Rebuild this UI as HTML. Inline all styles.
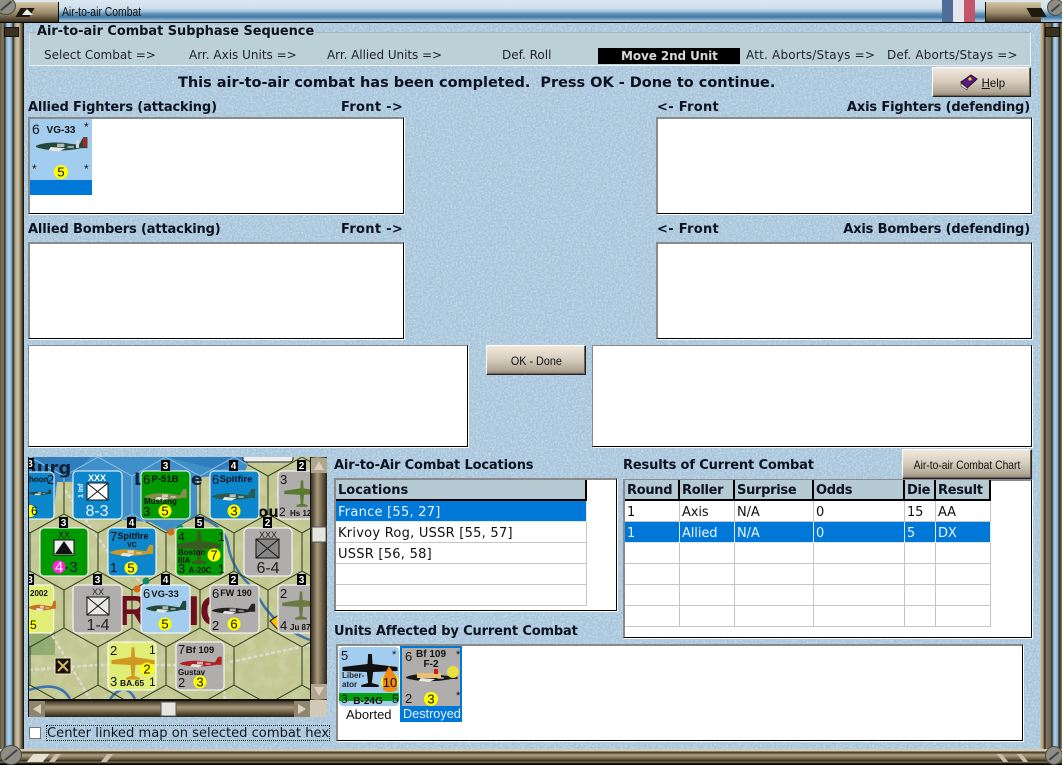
<!DOCTYPE html>
<html><head><meta charset="utf-8"><title>Air-to-air Combat</title>
<style>
html,body{margin:0;padding:0;width:1062px;height:765px;overflow:hidden;background:#a9c6dc}
*{box-sizing:border-box}
.a{position:absolute}
.t{position:absolute;white-space:pre;font-family:"DejaVu Sans",Verdana,sans-serif;color:#000;line-height:1}
.b{font-weight:bold;font-size:13px;color:#0c1220;letter-spacing:-.15px}
.f{letter-spacing:.3px}
.s{font-size:12px;color:#1c2230;top:49px}
.box{position:absolute;background:#fff;border:1px solid;border-width:2px 1px 1px 2px;border-color:#8a8a8a #000 #000 #8a8a8a;box-shadow:1px 1px 0 #fff}
.btn{position:absolute;background:linear-gradient(#f0e8dc,#d8cfc0 45%,#b3a796 85%,#8f8474);border:1px solid;border-color:#fff #222 #222 #fff;box-shadow:inset -1px -1px 0 #6e6455;font-family:"Liberation Sans",sans-serif;font-size:12px;color:#111;text-align:center;white-space:nowrap}
.h{position:absolute;background:#b5cad3;border-right:2px solid #000;border-bottom:2px solid #000;font:bold 13px "DejaVu Sans",sans-serif;color:#0c1220;padding:3px 0 0 2px;height:21px;letter-spacing:-.3px}
.c{position:absolute;font:13px "DejaVu Sans",sans-serif;color:#111;height:21px;border-right:1px solid #c6c6c6;border-bottom:1px solid #c6c6c6;padding:4px 0 0 2px;white-space:pre;letter-spacing:-.1px}
.l{letter-spacing:.25px}
.sel{background:#0078d7;color:#e8f2fb;border-color:#dce8f2}
svg text{font-family:"Liberation Sans",sans-serif}
.sc{position:absolute;border-radius:50%;background:#8d8d85;border:1px solid #4a4a40}
.sc:after{content:"";position:absolute;left:2px;right:2px;top:45%;height:2px;background:#444;transform:rotate(-40deg)}
</style></head><body>

<!-- textured background -->
<svg class="a" style="left:0;top:0" width="1062" height="765">
<filter id="n" x="0" y="0" width="100%" height="100%"><feTurbulence type="fractalNoise" baseFrequency="0.55" numOctaves="3" seed="4"/><feColorMatrix values="0 0 0 0 1  0 0 0 0 1  0 0 0 0 1  0.9 0 0 0 -0.32"/></filter>
<rect width="1062" height="765" fill="#a4c3da"/>
<rect width="1062" height="765" filter="url(#n)"/>
</svg>

<!-- title bar -->
<div class="a" style="left:0;top:0;width:1062px;height:23px;background:linear-gradient(#dce8f1,#cfe0ec 8px,#a9c6dc 11px,#5f92b8 14px,#427aa6 17px,#8fb3cd 20px,#a8c5da 22px,#000 22px)"></div>
<div class="a" style="left:942px;top:0;width:11px;height:22px;background:#506f98"></div>
<div class="a" style="left:953px;top:0;width:11px;height:22px;background:#e4e8ee"></div>
<div class="a" style="left:964px;top:0;width:11px;height:22px;background:#c4566a"></div>
<div class="a" style="left:0;top:2px;width:59px;height:21px;background:linear-gradient(#d6c8a8,#9a8a68 55%,#3c3020);border-right:1px solid #000;border-bottom:1px solid #000"></div>
<div class="a" style="left:985px;top:2px;width:56px;height:21px;background:linear-gradient(#d6c8a8,#9a8a68 55%,#3c3020);border-left:1px solid #000;border-bottom:1px solid #000"></div>
<div class="a" style="left:18px;top:8px;width:14px;height:9px;background:#1f1a10;transform:skewX(-30deg)"></div>
<svg class="a" style="left:22px;top:9px" width="12" height="7"><path d="M5 0 L11 6 H0 Z" fill="#f0f0e8"/></svg>
<div class="a" style="left:1029px;top:8px;width:15px;height:9px;background:#1f1a10;transform:skewX(30deg)"></div>
<div class="sc" style="left:-4px;top:-3px;width:20px;height:18px"></div>
<div class="sc" style="left:1047px;top:-1px;width:17px;height:17px"></div>
<div class="t" style="left:62px;top:4px;font:13px 'Liberation Sans',sans-serif;color:#111;transform:scaleX(.8);transform-origin:0 0">Air-to-air Combat</div>

<!-- side frames -->
<div class="a" style="left:0;top:23px;width:24px;height:727px;background:linear-gradient(90deg,#5f5642 0,#8a7d60 3px,#2a2416 5px,#7ba6c8 6px,#b6d4ea 9px,#6e9cc0 12px,#231d12 13px,#a89a7c 15px,#d3c9ae 18px,#7d6f52 21px,#332a1a 23px,#000 24px)"></div>
<div class="a" style="left:4px;top:27px;width:15px;height:10px;background:#3c3222;border:1px solid #111"></div>
<div class="a" style="left:1040px;top:23px;width:22px;height:727px;background:linear-gradient(90deg,#cfc6ac 0,#a89a7c 3px,#221c10 5px,#85776a 6px,#6d5f45 11px,#231d12 12px,#6e9cc0 13px,#b6d4ea 15px,#7ba6c8 18px,#2a2416 19px,#8a7d60 22px)"></div>
<div class="a" style="left:1045px;top:27px;width:15px;height:10px;background:#3c3222;border:1px solid #111"></div>
<!-- bottom frame -->
<div class="a" style="left:0;top:749px;width:1062px;height:16px;background:linear-gradient(#d6ccb2 0,#d6ccb2 2px,#3a3020 3px,#b0a280 6px,#6a5e44 10px,#2f2819 12px,#8a7d60 13px,#000 15px)"></div>
<div class="sc" style="left:0;top:745px;width:22px;height:20px"></div>
<div class="sc" style="left:1045px;top:746px;width:18px;height:19px"></div>
<div class="a" style="left:30px;top:754px;width:16px;height:8px;background:#e6e0d0;transform:skewX(-40deg)"></div>
<div class="a" style="left:52px;top:754px;width:6px;height:8px;background:#c8bfa8;transform:skewX(-40deg)"></div>
<div class="a" style="left:104px;top:754px;width:6px;height:8px;background:#c8bfa8;transform:skewX(-40deg)"></div>
<div class="a" style="left:1000px;top:754px;width:5px;height:8px;background:#c8bfa8;transform:skewX(40deg)"></div>
<div class="a" style="left:1020px;top:754px;width:5px;height:8px;background:#c8bfa8;transform:skewX(40deg)"></div>

<!-- sequence group -->
<div class="a" style="left:29px;top:32px;width:1002px;height:34px;background:#bcd0d8;border:1px solid #eef2f4;border-top-color:#a8b4b8;border-left-color:#d8e0e4"></div>
<div class="t b" style="left:36px;top:26px;background:#bcd0d8;padding:0 1px;letter-spacing:0;font-size:12.9px">Air-to-air Combat Subphase Sequence</div>
<div class="t s" style="left:44px">Select Combat =&gt;</div>
<div class="t s" style="left:189px">Arr. Axis Units =&gt;</div>
<div class="t s" style="left:327px;letter-spacing:-.05px">Arr. Allied Units =&gt;</div>
<div class="t s" style="left:502px">Def. Roll</div>
<div class="a" style="left:598px;top:48px;width:142px;height:16px;background:#000"></div>
<div class="t" style="left:621px;top:50px;font-size:12px;font-weight:bold;color:#d8d8d8;letter-spacing:-.1px">Move 2nd Unit</div>
<div class="t s" style="left:746px;letter-spacing:.2px">Att. Aborts/Stays =&gt;</div>
<div class="t s" style="left:887px;letter-spacing:.15px">Def. Aborts/Stays =&gt;</div>

<div class="t" style="left:178px;top:76px;font-size:14.5px;font-weight:bold;color:#0c1220;letter-spacing:-.02px">This air-to-air combat has been completed.  Press OK - Done to continue.</div>

<div class="btn" style="left:932px;top:67px;width:99px;height:30px;padding:8px 0 0 24px"><span style="display:inline-block;transform:scaleX(.95)"><span style="text-decoration:underline">H</span>elp</span></div>
<svg class="a" style="left:959px;top:73px" width="20" height="18"><path d="M2 9 L12 2 L18 6 L8 15 Z" fill="#5a1a78" stroke="#2a0a3a"/><path d="M2 10 L8 15 L8 17 L2 13 Z" fill="#eee" stroke="#333" stroke-width=".6"/><circle cx="11" cy="6" r="1.6" fill="#f0d040"/></svg>

<!-- labels -->
<div class="t b" style="left:28px;top:101px">Allied Fighters (attacking)</div>
<div class="t b f" style="left:341px;top:101px">Front -&gt;</div>
<div class="t b f" style="left:657px;top:101px">&lt;- Front</div>
<div class="t b" style="right:32px;top:101px">Axis Fighters (defending)</div>
<div class="t b" style="left:28px;top:223px">Allied Bombers (attacking)</div>
<div class="t b f" style="left:341px;top:223px">Front -&gt;</div>
<div class="t b f" style="left:657px;top:223px">&lt;- Front</div>
<div class="t b" style="right:32px;top:223px">Axis Bombers (defending)</div>

<div class="box" style="left:28px;top:117px;width:376px;height:97px"></div>
<div class="box" style="left:656px;top:117px;width:376px;height:97px"></div>
<div class="box" style="left:28px;top:242px;width:376px;height:97px"></div>
<div class="box" style="left:656px;top:242px;width:376px;height:97px"></div>
<div class="box" style="left:28px;top:345px;width:440px;height:102px;border-width:1px"></div>
<div class="box" style="left:592px;top:345px;width:440px;height:102px;border-width:1px"></div>
<div class="btn" style="left:486px;top:345px;width:100px;height:30px;padding-top:8px"><span style="display:inline-block;transform:scaleX(.9)">OK - Done</span></div>

<!-- locations -->
<div class="t b" style="left:334px;top:459px">Air-to-Air Combat Locations</div>
<div class="box" style="left:334px;top:478px;width:283px;height:133px"></div>
<div class="h" style="left:336px;top:480px;width:251px;letter-spacing:0">Locations</div>
<div class="c sel l" style="left:336px;top:501px;width:251px">France [55, 27]</div>
<div class="c l" style="left:336px;top:522px;width:251px">Krivoy Rog, USSR [55, 57]</div>
<div class="c l" style="left:336px;top:543px;width:251px">USSR [56, 58]</div>
<div class="c" style="left:336px;top:564px;width:251px"></div>
<div class="c" style="left:336px;top:585px;width:251px"></div>

<!-- results -->
<div class="t b" style="left:623px;top:459px">Results of Current Combat</div>
<div class="box" style="left:623px;top:479px;width:409px;height:159px"></div>
<div class="btn" style="left:902px;top:449px;width:130px;height:30px;padding-top:8px"><span style="display:inline-block;transform:scaleX(.86)">Air-to-air Combat Chart</span></div>
<div class="h" style="left:625px;top:480px;width:55px">Round</div>
<div class="h" style="left:680px;top:480px;width:55px">Roller</div>
<div class="h" style="left:735px;top:480px;width:79px">Surprise</div>
<div class="h" style="left:814px;top:480px;width:91px">Odds</div>
<div class="h" style="left:905px;top:480px;width:31px">Die</div>
<div class="h" style="left:936px;top:480px;width:55px">Result</div>

<div class="c" style="left:625px;top:501px;width:55px">1</div><div class="c" style="left:680px;top:501px;width:55px">Axis</div><div class="c" style="left:735px;top:501px;width:79px">N/A</div><div class="c" style="left:814px;top:501px;width:91px">0</div><div class="c" style="left:905px;top:501px;width:31px">15</div><div class="c" style="left:936px;top:501px;width:55px">AA</div>
<div class="c sel" style="left:625px;top:522px;width:55px">1</div><div class="c sel" style="left:680px;top:522px;width:55px">Allied</div><div class="c sel" style="left:735px;top:522px;width:79px">N/A</div><div class="c sel" style="left:814px;top:522px;width:91px">0</div><div class="c sel" style="left:905px;top:522px;width:31px">5</div><div class="c sel" style="left:936px;top:522px;width:55px">DX</div>
<div class="c" style="left:625px;top:543px;width:55px"></div><div class="c" style="left:680px;top:543px;width:55px"></div><div class="c" style="left:735px;top:543px;width:79px"></div><div class="c" style="left:814px;top:543px;width:91px"></div><div class="c" style="left:905px;top:543px;width:31px"></div><div class="c" style="left:936px;top:543px;width:55px"></div>
<div class="c" style="left:625px;top:564px;width:55px"></div><div class="c" style="left:680px;top:564px;width:55px"></div><div class="c" style="left:735px;top:564px;width:79px"></div><div class="c" style="left:814px;top:564px;width:91px"></div><div class="c" style="left:905px;top:564px;width:31px"></div><div class="c" style="left:936px;top:564px;width:55px"></div>
<div class="c" style="left:625px;top:585px;width:55px"></div><div class="c" style="left:680px;top:585px;width:55px"></div><div class="c" style="left:735px;top:585px;width:79px"></div><div class="c" style="left:814px;top:585px;width:91px"></div><div class="c" style="left:905px;top:585px;width:31px"></div><div class="c" style="left:936px;top:585px;width:55px"></div>
<div class="c" style="left:625px;top:606px;width:55px"></div><div class="c" style="left:680px;top:606px;width:55px"></div><div class="c" style="left:735px;top:606px;width:79px"></div><div class="c" style="left:814px;top:606px;width:91px"></div><div class="c" style="left:905px;top:606px;width:31px"></div><div class="c" style="left:936px;top:606px;width:55px"></div>

<!-- units affected -->
<div class="t b" style="left:334px;top:625px">Units Affected by Current Combat</div>
<div class="box" style="left:336px;top:644px;width:687px;height:97px"></div>
<div class="a" style="left:400px;top:646px;width:62px;height:76px;background:#0078d7"></div>
<div class="t" style="left:346px;top:707px;font:13px 'Liberation Sans',sans-serif;color:#111">Aborted</div>
<div class="t" style="left:403px;top:707px;font:12.7px 'Liberation Sans',sans-serif;color:#e8f2fb">Destroyed</div>

<!-- checkbox -->
<div class="a" style="left:29px;top:727px;width:12px;height:12px;background:#fff;border:1px solid #777"></div>
<div class="t" style="left:46px;top:725px;width:284px;height:16px;padding:1px 0 0 0;font-size:13.1px;color:#10161f;border:1px dotted #222">Center linked map on selected combat hex</div>

<!-- graphics -->
<svg class="a" style="left:0;top:0" width="1062" height="765" viewBox="0 0 1062 765">
<defs>
<clipPath id="mc"><rect x="29" y="457" width="281" height="242"/></clipPath>
<clipPath id="sea"><path d="M29 457 H250 L245 472 L197 478 L197 515 L168 532 L150 522 L122 520 L100 505 L75 482 L57 482 L54 510 L29 520 Z"/></clipPath>
<pattern id="hex" patternUnits="userSpaceOnUse" x="98" y="628" width="68" height="114"><path d="M34 0 L0 19 V57 L34 76 L68 57 V19 L34 0 M34 76 V114" fill="none" stroke="#2a3a18" stroke-width="1"/></pattern>
<pattern id="hexb" patternUnits="userSpaceOnUse" x="98" y="628" width="68" height="114"><path d="M34 0 L0 19 V57 L34 76 L68 57 V19 L34 0 M34 76 V114" fill="none" stroke="#8fc0e0" stroke-width="1"/></pattern>
<filter id="land" x="0" y="0" width="100%" height="100%"><feTurbulence type="fractalNoise" baseFrequency="0.09" numOctaves="3" seed="9"/><feColorMatrix values="0 0 0 0 .6  0 0 0 0 .66  0 0 0 0 .38  1.8 0 0 0 -.7"/></filter>
<g id="side"><path d="M0 9 C6 6 20 5 32 7 L41 8 L45 1 L49 1 L49 11 L43 11 C30 14 10 14 0 10 Z"/><path d="M14 10 L28 11 L22 14 L12 13 Z" fill="#e8e8e0"/><rect x="20" y="7" width="7" height="3" fill="#eee" opacity=".7"/><rect x="30" y="9" width="6" height="2" fill="#e8e8e0" opacity=".6"/></g>
<g id="top"><path d="M-1.500 -17 L1.500 -17 L2 -7 L22 -4 L22 0 L2.500 1 L1.500 12 L7 14 L7 16 L-7 16 L-7 14 L-1.500 12 L-2.500 1 L-22 0 L-22 -4 L-2 -7 Z"/></g>
</defs>

<!-- first panel counter -->
<rect x="30" y="180" width="62" height="15" fill="#0078d7"/>
<rect x="30" y="119" width="62" height="61" fill="#a3cdee"/>
<use href="#side" transform="translate(36,136) scale(1.05,1.1)" fill="#24473c"/>
<rect x="76" y="140" width="3" height="8" fill="#d8d8d8"/><rect x="83" y="138" width="4" height="9" fill="#a22"/>
<circle cx="61" cy="172" r="7" fill="#ffff00"/>
<text x="61" y="176.500" font-size="13" text-anchor="middle" fill="#111">5</text>
<text x="32" y="134" font-size="14" fill="#111">6</text>
<text x="61" y="133" font-size="10" font-weight="bold" text-anchor="middle" fill="#111">VG-33</text>
<text x="84" y="131" font-size="12" fill="#111">*</text><text x="32" y="173" font-size="12" fill="#111">*</text><text x="84" y="173" font-size="12" fill="#111">*</text>

<!-- units affected counters -->
<rect x="339" y="647" width="60" height="59" rx="4" fill="#a3cdee"/>
<rect x="339" y="693" width="60" height="8" fill="#05a010"/>
<g transform="translate(370,671) scale(1.25,1)" fill="#101010"><use href="#top"/></g>
<circle cx="390" cy="682" r="9" fill="#ffff00" opacity=".8"/>
<path d="M389 666 L397 678 L397 690 Q390 694 383 690 L383 678 Z" fill="#f08a10"/>
<text x="390" y="687" font-size="13" text-anchor="middle" fill="#111">10</text>
<text x="341" y="660" font-size="13" fill="#111">5</text>
<text x="392" y="658" font-size="11" fill="#111">*</text>
<text x="342" y="678" font-size="8" font-weight="bold" fill="#222">Liber-</text>
<text x="342" y="687" font-size="8" font-weight="bold" fill="#222">ator</text>
<text x="341" y="703" font-size="12" fill="#111">3</text>
<text x="368" y="704" font-size="10" font-weight="bold" text-anchor="middle" fill="#111">B-24G</text>
<text x="392" y="703" font-size="12" fill="#111">5</text>

<rect x="402" y="648" width="58" height="58" fill="#b0aeac"/>
<use href="#side" transform="translate(406,668) scale(1.05,1)" fill="#181818"/>
<rect x="417" y="673" width="24" height="5" fill="#e8c070"/><rect x="434" y="669" width="4" height="5" fill="#d02010"/>
<circle cx="453" cy="672" r="6" fill="#e8e040"/>
<circle cx="431" cy="699" r="7" fill="#ffff00"/>
<text x="431" y="703.500" font-size="13" text-anchor="middle" fill="#111">3</text>
<text x="405" y="661" font-size="13" fill="#111">6</text>
<text x="431" y="657" font-size="10" font-weight="bold" text-anchor="middle" fill="#111">Bf 109</text>
<text x="431" y="667" font-size="10" font-weight="bold" text-anchor="middle" fill="#111">F-2</text>
<text x="456" y="658" font-size="11" fill="#111">*</text>
<text x="405" y="703" font-size="13" fill="#111">2</text>
<text x="456" y="699" font-size="11" fill="#111">*</text>

<!-- map -->
<rect x="28" y="457" width="299" height="260" fill="#111"/>
<g clip-path="url(#mc)">
<rect x="29" y="457" width="281" height="242" fill="#c2c691"/>
<rect x="29" y="457" width="281" height="242" filter="url(#land)"/>
<rect x="29" y="585" width="26" height="70" fill="#6f9a58" opacity=".6"/>
<path d="M196 516 Q225 525 228 545 Q232 570 255 590 Q270 625 310 640" fill="none" stroke="#3d74ae" stroke-width="2.500"/>
<path d="M29 690 Q60 680 70 699 M110 699 Q125 680 135 699" fill="none" stroke="#3d74ae" stroke-width="2.500"/>
<path d="M29 670 L97 665 L180 665 M230 662 L310 645 M40 615 L70 665 L90 699 M65 490 L110 555 L150 590 M220 660 L225 699" fill="none" stroke="#dedbd0" stroke-width="2.500" stroke-dasharray="4 2"/>
<rect x="29" y="457" width="281" height="242" fill="url(#hex)"/>
<g clip-path="url(#sea)">
<rect x="29" y="457" width="281" height="90" fill="#3f8fc8"/>
<path d="M29 457 H90 L70 480 L29 500 Z M165 457 H250 L220 470 Z" fill="#2f7fbe"/>
<rect x="29" y="457" width="281" height="90" fill="url(#hexb)"/>
</g>
<text x="23" y="474" font-size="18" font-weight="bold" fill="#11233a" style="font-family:'DejaVu Sans'">Burg</text>
<text x="134" y="485" font-size="17" font-weight="bold" fill="#11233a" style="font-family:'DejaVu Sans'">L</text>
<text x="191" y="485" font-size="17" font-weight="bold" fill="#11233a" style="font-family:'DejaVu Sans'">e</text>
<text x="258" y="517" font-size="15" font-weight="bold" fill="#111" style="font-family:'DejaVu Sans'">oue</text>
<text x="118" y="625" font-size="42" font-weight="bold" fill="#6d0f1e">RA</text>
<text x="188" y="625" font-size="42" font-weight="bold" fill="#6d0f1e">IC</text>
<circle cx="180" cy="528" r="3.500" fill="#0c8a6a"/><circle cx="171" cy="532" r="3.500" fill="#d86a10"/>
<circle cx="146" cy="581" r="3.500" fill="#0c8a6a"/><circle cx="137" cy="589" r="3.500" fill="#d86a10"/>
<path d="M280 614 L270 621 L280 632 Z" fill="#ffc000" stroke="#111"/>
<rect x="55" y="658" width="16" height="16" fill="#111" stroke="#f0e0b0"/><path d="M58 661 L68 671 M68 661 L58 671" stroke="#d8b860" stroke-width="2"/>
<rect x="243" y="450" width="50" height="12" rx="3" fill="#eee" stroke="#222"/>

<!-- row 1 -->
<rect x="5" y="472" width="49" height="47" rx="4" fill="#0d87cb" stroke="#fff"/>
<use href="#side" transform="translate(29,489) scale(.45)" fill="#24473c"/><text x="29" y="482" font-size="8" fill="#111" font-weight="bold">hoon</text><text x="47" y="484" font-size="13" fill="#111">2</text><circle cx="30" cy="511" r="6" fill="#ff0"/><text x="31" y="515" font-size="12" fill="#111">6</text>
<rect x="73" y="471" width="49" height="48" rx="4" fill="#0d87cb" stroke="#fff"/>
<text x="97" y="481" font-size="9" font-weight="bold" text-anchor="middle" fill="#fff">XXX</text>
<rect x="87" y="483" width="21" height="17" fill="#fff" stroke="#111"/><path d="M87 483 L108 500 M108 483 L87 500" stroke="#111"/>
<text x="97" y="516" font-size="16" text-anchor="middle" fill="#e8f2ff">8-3</text>
<text transform="translate(83,498) rotate(-90)" font-size="7" font-weight="bold" fill="#fff">1 Inf</text>
<rect x="141" y="471" width="49" height="48" rx="4" fill="#009a00" stroke="#fff"/>
<use href="#side" transform="translate(145,488) scale(.85,.9)" fill="#8a8a50"/>
<text x="165" y="482" font-size="9.500" font-weight="bold" text-anchor="middle" fill="#111">P-51B</text><text x="143" y="484" font-size="13" fill="#111">6</text><text x="144" y="504" font-size="8" font-weight="bold" fill="#111">Mustang</text><text x="143" y="516" font-size="13" fill="#111">3</text>
<circle cx="165" cy="511" r="6.500" fill="#ff0"/><text x="165" y="515.500" font-size="13" text-anchor="middle" fill="#111">5</text>
<rect x="210" y="471" width="49" height="48" rx="4" fill="#0d87cb" stroke="#fff"/>
<use href="#side" transform="translate(212,488) scale(.88,.9)" fill="#2a5a50"/>
<text x="236" y="482" font-size="9.500" font-weight="bold" text-anchor="middle" fill="#112">Spitfire</text><text x="212" y="484" font-size="13" fill="#112">6</text>
<circle cx="234" cy="511" r="6.500" fill="#ff0"/><text x="234" y="515.500" font-size="13" text-anchor="middle" fill="#111">3</text>
<rect x="278" y="471" width="49" height="48" rx="4" fill="#b0aeac" stroke="#fff"/>
<g transform="translate(302,494) scale(.8)" fill="#5a7a30"><use href="#top"/></g>
<text x="280" y="484" font-size="13" fill="#111">3</text><text x="279" y="516" font-size="12" fill="#111">2</text><text x="290" y="516" font-size="8" font-weight="bold" fill="#111">Hs 12</text>

<!-- row 2 -->
<rect x="40" y="528" width="48" height="48" rx="4" fill="#009a00" stroke="#fff"/>
<text x="64" y="538" font-size="9" text-anchor="middle" fill="#111">XX</text>
<rect x="54" y="540" width="20" height="15" fill="#eee" stroke="#111"/><path d="M64 541 L73 554 H55 Z" fill="#111"/>
<circle cx="59" cy="567" r="6.500" fill="#ff20d8"/><text x="59" y="572" font-size="15" text-anchor="middle" fill="#fff">4</text><text x="71" y="572" font-size="15" text-anchor="middle" fill="#123">-3</text>
<rect x="108" y="528" width="48" height="48" rx="4" fill="#0d87cb" stroke="#fff"/>
<use href="#side" transform="translate(110,544) scale(.88,.9)" fill="#c89a28"/>
<text x="133" y="539" font-size="9" font-weight="bold" text-anchor="middle" fill="#111">Spitfire</text><text x="132" y="547" font-size="7" font-weight="bold" text-anchor="middle" fill="#111">VC</text><text x="110" y="541" font-size="13" fill="#111">7</text><text x="110" y="572" font-size="13" fill="#111">1</text>
<circle cx="131" cy="568" r="6.500" fill="#ff0"/><text x="131" y="572.500" font-size="13" text-anchor="middle" fill="#111">5</text>
<rect x="176" y="528" width="48" height="48" rx="4" fill="#009a00" stroke="#fff"/>
<g transform="translate(199,548) scale(1,1)" fill="#3a5a20"><use href="#top"/></g>
<text x="178" y="541" font-size="12" fill="#111">4</text><text x="218" y="541" font-size="12" fill="#111">1</text><text x="178" y="555" font-size="8" font-weight="bold" fill="#111">Boston</text><text x="178" y="563" font-size="8" font-weight="bold" fill="#111">IIIA</text><text x="178" y="573" font-size="13" fill="#111">3</text><text x="200" y="573" font-size="8" font-weight="bold" text-anchor="middle" fill="#111">A-20C</text><text x="218" y="573" font-size="12" fill="#111">1</text>
<circle cx="214" cy="555" r="6.500" fill="#ff0"/><text x="214" y="559.500" font-size="13" text-anchor="middle" fill="#111">7</text>
<rect x="244" y="528" width="48" height="48" rx="4" fill="#b0aeac" stroke="#fff"/>
<text x="268" y="538" font-size="9" text-anchor="middle" fill="#222">XXX</text>
<rect x="256" y="539" width="23" height="19" fill="#888" stroke="#111"/><path d="M256 539 L279 558 M279 539 L256 558" stroke="#111"/>
<text x="268" y="573" font-size="16" text-anchor="middle" fill="#222">6-4</text>

<!-- row 3 -->
<rect x="5" y="585" width="49" height="48" rx="4" fill="#e0ee78" stroke="#fff"/>
<use href="#side" transform="translate(29,600) scale(.55,.8)" fill="#c87020"/><text x="30" y="596" font-size="8" font-weight="bold" fill="#111">2002</text><circle cx="30" cy="625" r="6" fill="#ff0"/><text x="30" y="629" font-size="12" fill="#111">5</text>
<rect x="73" y="585" width="49" height="48" rx="4" fill="#b0aeac" stroke="#fff"/>
<text x="98" y="595" font-size="9" text-anchor="middle" fill="#222">XX</text>
<rect x="87" y="597" width="22" height="18" fill="#e8e8e8" stroke="#111"/><path d="M87 597 L109 615 M109 597 L87 615" stroke="#111"/>
<text x="98" y="630" font-size="16" text-anchor="middle" fill="#222">1-4</text>
<rect x="141" y="585" width="49" height="48" rx="4" fill="#a3cdee" stroke="#fff"/>
<use href="#side" transform="translate(146,600) scale(.82,.9)" fill="#24473c"/>
<text x="165" y="597" font-size="9.500" font-weight="bold" text-anchor="middle" fill="#111">VG-33</text><text x="143" y="598" font-size="13" fill="#111">6</text>
<circle cx="165" cy="624" r="6.500" fill="#ff0"/><text x="165" y="628.500" font-size="13" text-anchor="middle" fill="#111">5</text>
<rect x="210" y="585" width="49" height="48" rx="4" fill="#b0aeac" stroke="#fff"/>
<use href="#side" transform="translate(212,603) scale(.88,.8)" fill="#222"/>
<text x="236" y="596" font-size="9" font-weight="bold" text-anchor="middle" fill="#111">FW 190</text><text x="212" y="598" font-size="13" fill="#111">6</text><text x="212" y="630" font-size="13" fill="#111">2</text>
<circle cx="234" cy="624" r="6.500" fill="#ff0"/><text x="234" y="628.500" font-size="13" text-anchor="middle" fill="#111">6</text>
<rect x="278" y="585" width="49" height="48" rx="4" fill="#b0aeac" stroke="#fff"/>
<g transform="translate(301,606) scale(.85)" fill="#6a7a40"><use href="#top"/></g>
<text x="280" y="598" font-size="13" fill="#111">2</text><text x="280" y="630" font-size="13" fill="#111">4</text><text x="290" y="630" font-size="8" font-weight="bold" fill="#111">Ju 87</text>

<!-- row 4 -->
<rect x="108" y="642" width="48" height="48" rx="4" fill="#e0ee78" stroke="#fff"/>
<g transform="translate(133,664) scale(.98)" fill="#d09a20"><use href="#top"/></g>
<text x="110" y="655" font-size="13" fill="#111">2</text><text x="149" y="654" font-size="12" fill="#111">1</text><text x="110" y="686" font-size="13" fill="#111">3</text><text x="132" y="686" font-size="8.500" font-weight="bold" text-anchor="middle" fill="#111">BA.65</text><text x="149" y="686" font-size="12" fill="#111">1</text>
<circle cx="147" cy="669" r="6.500" fill="#ff0"/><text x="147" y="673.500" font-size="13" text-anchor="middle" fill="#111">2</text>
<rect x="176" y="642" width="48" height="48" rx="4" fill="#b0aeac" stroke="#fff"/>
<use href="#side" transform="translate(180,656) scale(.85,.8)" fill="#b02020"/>
<text x="200" y="653" font-size="9.500" font-weight="bold" text-anchor="middle" fill="#111">Bf 109</text><text x="178" y="654" font-size="13" fill="#111">7</text><text x="178" y="675" font-size="8" font-weight="bold" fill="#111">Gustav</text><text x="178" y="687" font-size="13" fill="#111">2</text>
<circle cx="200" cy="682" r="6.500" fill="#ff0"/><text x="200" y="686.500" font-size="13" text-anchor="middle" fill="#111">3</text>

<!-- stack badges -->
<g font-size="10" font-weight="bold" fill="#fff" text-anchor="middle">
<rect x="25" y="458" width="9" height="11" fill="#000"/><text x="30" y="467">3</text>
<rect x="161" y="460" width="9" height="11" fill="#000"/><text x="165.500" y="469">3</text>
<rect x="229" y="460" width="9" height="11" fill="#000"/><text x="233.500" y="469">4</text>
<rect x="297" y="460" width="9" height="11" fill="#000"/><text x="301.500" y="469">2</text>
<rect x="59" y="517" width="9" height="11" fill="#000"/><text x="63.500" y="526">3</text>
<rect x="127" y="517" width="9" height="11" fill="#000"/><text x="131.500" y="526">4</text>
<rect x="195" y="517" width="9" height="11" fill="#000"/><text x="199.500" y="526">5</text>
<rect x="263" y="517" width="9" height="11" fill="#000"/><text x="267.500" y="526">2</text>
<rect x="25" y="574" width="9" height="11" fill="#000"/><text x="30" y="583">3</text>
<rect x="93" y="574" width="9" height="11" fill="#000"/><text x="97.500" y="583">3</text>
<rect x="161" y="574" width="9" height="11" fill="#000"/><text x="165.500" y="583">4</text>
<rect x="229" y="574" width="9" height="11" fill="#000"/><text x="233.500" y="583">2</text>
<rect x="297" y="574" width="9" height="11" fill="#000"/><text x="301.500" y="583">3</text>
</g>
</g>

<!-- scrollbars -->
<defs>
<linearGradient id="sv" x1="0" x2="1" y1="0" y2="0"><stop offset="0" stop-color="#3a3020"/><stop offset=".4" stop-color="#a89a7c"/><stop offset=".7" stop-color="#6d5f45"/><stop offset="1" stop-color="#2a2416"/></linearGradient>
<linearGradient id="sh" x1="0" x2="0" y1="0" y2="1"><stop offset="0" stop-color="#3a3020"/><stop offset=".4" stop-color="#a89a7c"/><stop offset=".7" stop-color="#6d5f45"/><stop offset="1" stop-color="#2a2416"/></linearGradient>
</defs>
<rect x="311" y="457" width="16" height="243" fill="url(#sv)"/>
<rect x="311" y="458" width="16" height="15" fill="#b0a68e"/><path d="M319 461 L324 470 H314 Z" fill="#d8d0bc"/>
<rect x="311" y="684" width="16" height="15" fill="#b0a68e"/><path d="M319 696 L324 687 H314 Z" fill="#d8d0bc"/>
<rect x="312" y="527" width="14" height="15" fill="#e6e6e0" stroke="#555"/>
<rect x="29" y="701" width="281" height="16" fill="url(#sh)"/>
<rect x="29" y="701" width="16" height="16" fill="#8f856e"/><path d="M33 709 L41 704 V714 Z" fill="#d8d0bc"/>
<rect x="294" y="701" width="16" height="16" fill="#8f856e"/><path d="M306 709 L298 704 V714 Z" fill="#d8d0bc"/>
<rect x="161" y="702" width="15" height="14" fill="#e6e6e0" stroke="#555"/>
<rect x="310" y="700" width="17" height="17" fill="#cfc9b8"/>
</svg>
</body></html>
